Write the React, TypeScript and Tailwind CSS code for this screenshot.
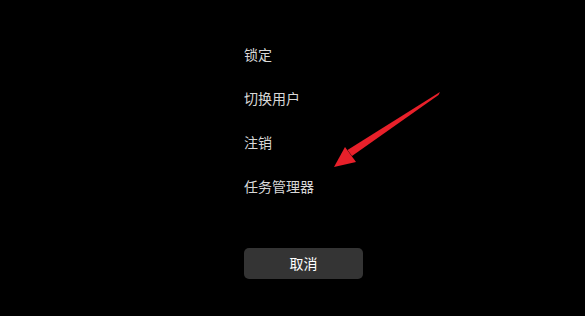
import React from "react"

const items = ["锁定", "切换用户", "注销", "任务管理器"]

function Arrow() {
  return (
    <svg
      className="absolute left-0 top-0 pointer-events-none"
      width="585"
      height="316"
      viewBox="0 0 585 316"
    >
      {/* shaft: thin at tail, wider at head */}
      <polygon points="440,92 438.5,95 352,156 347.5,150" fill="#e8202a" />
      {/* head */}
      <polygon points="334,167 345,147 356,162" fill="#e8202a" />
    </svg>
  )
}

export default function App() {
  return (
    <div
      className="relative w-[585px] h-[316px] bg-black overflow-hidden"
      style={{ fontFamily: '"Noto Sans CJK SC", "Noto Sans", sans-serif' }}
    >
      <div className="flex flex-col pl-[244px] pt-[44px]">
        <div className="flex flex-col gap-[24px]">
          {items.map((t) => (
            <div key={t} className="text-[14px] leading-[20px] text-[#d8d8d8]">
              {t}
            </div>
          ))}
        </div>
        <button className="mt-[52px] w-[119px] h-[31px] rounded-[5px] bg-[#343434] text-white text-[14px] flex items-center justify-center">
          取消
        </button>
      </div>
      <Arrow />
    </div>
  )
}
